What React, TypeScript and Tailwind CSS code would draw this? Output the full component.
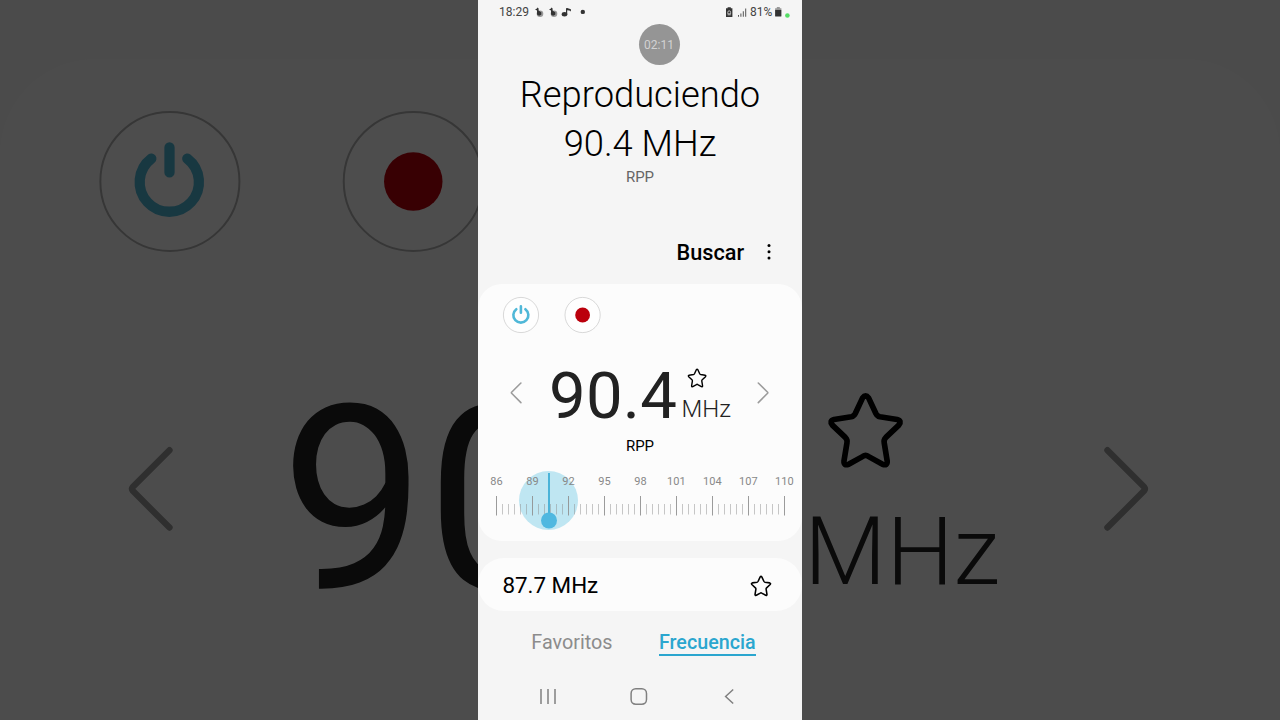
import type { ReactNode } from 'react'

const FREQUENCIES = [86, 89, 92, 95, 98, 101, 104, 107, 110]

function StarIcon({ className = '' }: { className?: string }) {
  return (
    <svg viewBox="77 87 240 240" className={className} fill="none" stroke="currentColor" strokeWidth="17" strokeLinejoin="round">
      <path d="M188 108Q197 96 206 108L228 155Q232 163 240 165L292 173Q307 177 297 190L258 227Q251 234 253 243L262 298Q263 313 248 308L205 284Q197 278 189 284L146 308Q131 313 132 298L141 243Q143 234 136 227L97 190Q87 177 102 173L154 165Q162 163 166 155Z" />
    </svg>
  )
}

function Chevron({ flip = false }: { flip?: boolean }) {
  return (
    <svg viewBox="0 0 12 22" className="mt-4 h-[22px] w-3 shrink-0" fill="none" stroke="#9c9c9c" strokeWidth="1.6" strokeLinecap="round" strokeLinejoin="round">
      <path d={flip ? 'M1.3 1L10.6 10.3Q11 10.8 10.6 11.3L1.3 20.6' : 'M10.9 1L1.6 10.3Q1.2 10.8 1.6 11.3L10.9 20.6'} />
    </svg>
  )
}

function RoundButton({ viewBox = '0 0 36 36', children }: { viewBox?: string; children: ReactNode }) {
  return (
    <svg viewBox={viewBox} className="size-9 shrink-0 overflow-visible" fill="none">
      <circle cx="18" cy="18" r="17.6" fill="#fefefe" stroke="#b2b2b2" strokeWidth="0.5" />
      {children}
    </svg>
  )
}

function TunerButtons() {
  return (
    <div className="flex gap-[25.5px] pt-[13px] pl-[25.2px]">
      <RoundButton>
        <path d="M13.3 12.2A7.5 7.5 0 1 0 22.4 12.2M17.9 9.4V15.7" stroke="#50b8d8" strokeWidth="2.6" strokeLinecap="round" />
      </RoundButton>
      <RoundButton viewBox="0.4 0 36 36">
        <circle cx="18" cy="18" r="7.4" fill="#bb000c" />
      </RoundButton>
    </div>
  )
}

function Frequency({ value, className = 'w-[132px]' }: { value: string; className?: string }) {
  return <div className={`shrink-0 text-[65.3px] leading-[60.8px] tracking-[0.2px] ${className}`}>{value}</div>
}

function Unit() {
  return (
    <div className="flex w-[60px] shrink-0 flex-col">
      <StarIcon className="mt-[1.7px] ml-[5px] size-[20.2px] text-black" />
      <span className="text-[24px] leading-[42.5px] font-light">MHz</span>
    </div>
  )
}

function TunerReadout() {
  return (
    <div className="mt-[33px] flex h-[60px] items-start pl-8 text-[#222]">
      <Chevron />
      <div className="ml-[27px]">
        <Frequency value="90.4" />
      </div>
      <div className="ml-[0.6px]">
        <Unit />
      </div>
      <div className="ml-[15.1px]">
        <Chevron flip />
      </div>
    </div>
  )
}

// Dimmed, enlarged slices of the tuner card on both sides of the phone
function LeftBackdrop() {
  return (
    <div className="h-[720px] w-[478px] shrink-0 overflow-hidden bg-[#f7f7f7] opacity-30" aria-hidden="true">
      <div className="mt-[58.5px] h-[168px] w-[121px] origin-top-left scale-[3.951] overflow-hidden rounded-tl-[24px] bg-[#fcfcfc]">
        <TunerButtons />
        <div className="mt-[33px] flex h-[60px] items-start gap-[27px] pl-8 text-[#222]">
          <Chevron />
          <Frequency value="90" className="w-[50px] overflow-hidden" />
        </div>
      </div>
    </div>
  )
}

function RightBackdrop() {
  return (
    <div className="h-[720px] w-[478px] shrink-0 overflow-hidden bg-[#f7f7f7] opacity-30" aria-hidden="true">
      <div className="mt-[58.5px] h-[168px] w-[121px] origin-top-left scale-[3.951] overflow-hidden rounded-tr-[24px] bg-[#fcfcfc] pt-[82px]">
        <div className="flex h-[60px] items-start gap-[15.2px] pl-[0.6px] text-[#222]">
          <Unit />
          <Chevron flip />
        </div>
      </div>
    </div>
  )
}

function StatusBar() {
  return (
    <div className="flex h-6 shrink-0 items-center pl-[21px] text-[12px] text-[#444]">
      <span className="w-[31px] leading-6">18:29</span>
      <svg viewBox="0 0 60 12" className="ml-1 h-3 w-[60px]" fill="#333">
        {[0, 14].map((x) => (
          <g key={x} transform={`translate(${x} 0)`}>
            <circle cx="6" cy="7.8" r="3.3" fill="#999" />
            <path d="M1 3.4L2.6 2.8L3.6 1.4L4.6 2.4L4.6 4.6L7.4 6.6L7.2 8.8L5 9.8L3 8.4L3 4.6Z" />
          </g>
        ))}
        <ellipse cx="30.5" cy="8.3" rx="2.8" ry="2.2" />
        <path d="M32 8.6V2.2L33.2 2L36.9 3.2V5.4L35.4 4.4L33.2 4.2V8.6Z" />
        <circle cx="48.8" cy="5.9" r="2.2" />
      </svg>
      <svg viewBox="0 0 24 12" className="ml-[130px] h-3 w-6" fill="#333">
        <path d="M3.6 1.2H6.8V2.2H8.4V11H2V2.2H3.6Z" />
        <path d="M3.8 7.8V6.4Q3.8 4.8 5.2 4.8T6.6 6.4V7.8ZM3.6 8.8H6.8" fill="none" stroke="#ddd" strokeWidth="0.8" />
        <path d="M14 9H15V10.7H14ZM16.4 7.6H17.4V10.7H16.4ZM18.8 5.2H19.8V10.7H18.8ZM21.2 2.4H22.2V10.7H21.2Z" fill="#555" />
      </svg>
      <span className="ml-[2px] w-[23.6px] leading-6">81%</span>
      <svg viewBox="0 0 20 14" className="h-3.5 w-5" fill="#333">
        <path d="M2.8 2H5.8V3.2H7.4V5H1.1V3.2H2.8Z" fill="#999" />
        <path d="M1.1 5H7.4V11Q7.4 11.6 6.8 11.6H1.7Q1.1 11.6 1.1 11Z" />
        <circle cx="13.4" cy="10.5" r="2.3" fill="#55dd66" />
      </svg>
    </div>
  )
}

function Dial() {
  const ticks = Array.from({ length: 49 }, (_, i) => i)
  return (
    <div className="relative mt-4 h-[76px]">
      {/* Needle halo, sits under the labels */}
      <div className="absolute top-0 left-[41px] size-[59px] rounded-full bg-[#bfe6f2]" />
      <div className="relative flex pt-[3px] pl-[0.4px]">
        {FREQUENCIES.map((f) => (
          <span key={f} className="w-9 shrink-0 text-center text-[11px] leading-[16px] text-[#888]">{f}</span>
        ))}
      </div>
      <svg viewBox="0 0 324 60" className="absolute top-0 left-0 h-[60px] w-[324px]" fill="none">
        {ticks.map((i) => {
          const x = 18.5 + i * 6
          return i % 6 === 0 ? (
            <path key={i} d={`M${x} 25V44.5`} stroke="#909090" strokeOpacity="0.9" />
          ) : (
            <path key={i} d={`M${x} 33V43.5`} stroke="#909090" strokeOpacity="0.5" />
          )
        })}
        <path d="M71 2V50" stroke="#4ab3d8" strokeWidth="2" />
        <circle cx="71" cy="49.5" r="8" fill="#4fb8e0" />
      </svg>
    </div>
  )
}

function NavBar() {
  return (
    <div className="mt-[28px] flex h-6 items-center gap-[66.6px] pl-[58.2px] text-[#808080]">
      <svg viewBox="0 0 24 24" className="size-6" fill="none" stroke="currentColor" strokeWidth="1.5">
        <path d="M5 5V20M12 5V20M19 5V20" />
      </svg>
      <svg viewBox="0 0 24 24" className="size-6" fill="none" stroke="currentColor" strokeWidth="1.5">
        <rect x="4.1" y="4.8" width="15.4" height="15.4" rx="4.6" />
      </svg>
      <svg viewBox="0 0 24 24" className="size-6" fill="none" stroke="currentColor" strokeWidth="1.5">
        <path d="M16.2 5.5L8.6 12.5L16.2 19.5" />
      </svg>
    </div>
  )
}

function Phone() {
  return (
    <main className="relative flex h-[720px] w-[324px] shrink-0 flex-col overflow-hidden bg-[#f5f5f5]">
      <StatusBar />
      {/* Screen recorder bubble */}
      <div className="absolute top-6 left-[161px] flex size-[41px] items-center justify-center rounded-full bg-[#959595] pr-px text-[12px] text-[#d2d2d2]">
        02:11
      </div>

      <header className="mt-[46px] flex flex-col items-center text-black">
        <h1 className="text-center text-[36.3px] leading-[49px] font-light">
          Reproduciendo
          <br />
          90.4 MHz
        </h1>
        <p className="text-[15px] leading-[18px] text-[#666]">RPP</p>
      </header>

      <div className="mt-[51px] flex h-8 items-center pl-[198.5px] text-black">
        <span className="w-[83.4px] text-[21.7px] leading-8 font-medium">Buscar</span>
        <svg viewBox="0 0 18 18" className="mb-[3px] size-[18px]" fill="currentColor">
          <circle cx="9" cy="2.5" r="1.5" />
          <circle cx="9" cy="8.8" r="1.5" />
          <circle cx="9" cy="14.9" r="1.5" />
        </svg>
      </div>

      <section className="mt-[15px] h-[257px] shrink-0 rounded-[24px] bg-[#fcfcfc]">
        <TunerButtons />
        <TunerReadout />
        <p className="mt-[11px] text-center text-[15px] leading-[18px] text-black">RPP</p>
        <Dial />
      </section>

      <section className="mt-[17px] flex h-[53px] shrink-0 items-center justify-between rounded-[26px] bg-[#fcfcfc] pr-[30px] pl-[24.4px] text-black">
        <span className="text-[22.4px] leading-[54px]">87.7 MHz</span>
        <StarIcon className="mt-[3px] size-[22px]" />
      </section>

      <nav className="mt-[17px] flex pl-[53.3px] text-[19.8px] leading-[27px]">
        <span className="w-[127.7px] pt-[0.5px] text-[#8c8c8c]">Favoritos</span>
        <span className="h-7 border-b-2 border-[#2ba6cf] pt-[0.5px] text-[19.7px] font-medium text-[#2ba6cf]">Frecuencia</span>
      </nav>

      <NavBar />
    </main>
  )
}

export default function App() {
  return (
    <div className="flex h-[720px] w-[1280px] overflow-hidden bg-black font-[Roboto,sans-serif]">
      <LeftBackdrop />
      <Phone />
      <RightBackdrop />
    </div>
  )
}
